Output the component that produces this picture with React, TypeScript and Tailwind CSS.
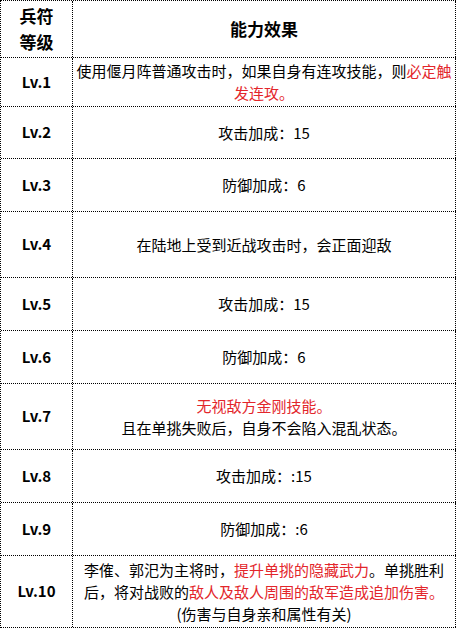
import React from "react";

type Part = { t: string; red?: boolean; br?: boolean };

const rows: { lv: string; h: string; parts: Part[] }[] = [
  {
    lv: "Lv.1",
    h: "h-[49px]",
    parts: [
      { t: "使用偃月阵普通攻击时，如果自身有连攻技能，则" },
      { t: "必定触", red: true, br: true },
      { t: "发连攻。", red: true },
    ],
  },
  { lv: "Lv.2", h: "h-[52px]", parts: [{ t: "攻击加成：15" }] },
  { lv: "Lv.3", h: "h-[53px]", parts: [{ t: "防御加成：6" }] },
  { lv: "Lv.4", h: "h-[66px]", parts: [{ t: "在陆地上受到近战攻击时，会正面迎敌" }] },
  { lv: "Lv.5", h: "h-[53px]", parts: [{ t: "攻击加成：15" }] },
  { lv: "Lv.6", h: "h-[53px]", parts: [{ t: "防御加成：6" }] },
  {
    lv: "Lv.7",
    h: "h-[66px]",
    parts: [
      { t: "无视敌方金刚技能。", red: true, br: true },
      { t: "且在单挑失败后，自身不会陷入混乱状态。" },
    ],
  },
  { lv: "Lv.8", h: "h-[53px]", parts: [{ t: "攻击加成：:15" }] },
  { lv: "Lv.9", h: "h-[53px]", parts: [{ t: "防御加成：:6" }] },
  {
    lv: "Lv.10",
    h: "h-[72px]",
    parts: [
      { t: "李傕、郭汜为主将时，" },
      { t: "提升单挑的隐藏武力", red: true },
      { t: "。单挑胜利", br: true },
      { t: "后，将对战败的" },
      { t: "敌人及敌人周围的敌军造成追加伤害。", red: true, br: true },
      { t: "(伤害与自身亲和属性有关)" },
    ],
  },
];

export default function App() {
  return (
    <div className="w-[456px] bg-white font-['Noto_Sans_CJK_SC','Noto_Sans',sans-serif] text-black">
      <div className="w-[456px] border-l border-t border-dotted border-black">
        <div className="flex h-[57px] border-b border-dotted border-black">
          <div className="flex w-[72px] shrink-0 items-center justify-center border-r border-dotted border-black text-center text-[17px] font-bold leading-[26px]">
            兵符
            <br />
            等级
          </div>
          <div className="flex w-[383px] shrink-0 items-center justify-center border-r border-dotted border-black text-[17px] font-bold">
            能力效果
          </div>
        </div>
        {rows.map((r) => (
          <div key={r.lv} className={`flex ${r.h} border-b border-dotted border-black`}>
            <div className="flex w-[72px] shrink-0 items-center justify-center border-r border-dotted border-black text-[15px] font-bold">
              {r.lv}
            </div>
            <div className="flex w-[383px] shrink-0 items-center justify-center border-r border-dotted border-black px-[3px]">
              <p className="text-center text-[15px] leading-[22px]">
                {r.parts.map((p, i) => (
                  <React.Fragment key={i}>
                    <span className={p.red ? "text-[#e3262b]" : ""}>{p.t}</span>
                    {p.br && <br />}
                  </React.Fragment>
                ))}
              </p>
            </div>
          </div>
        ))}
      </div>
    </div>
  );
}
